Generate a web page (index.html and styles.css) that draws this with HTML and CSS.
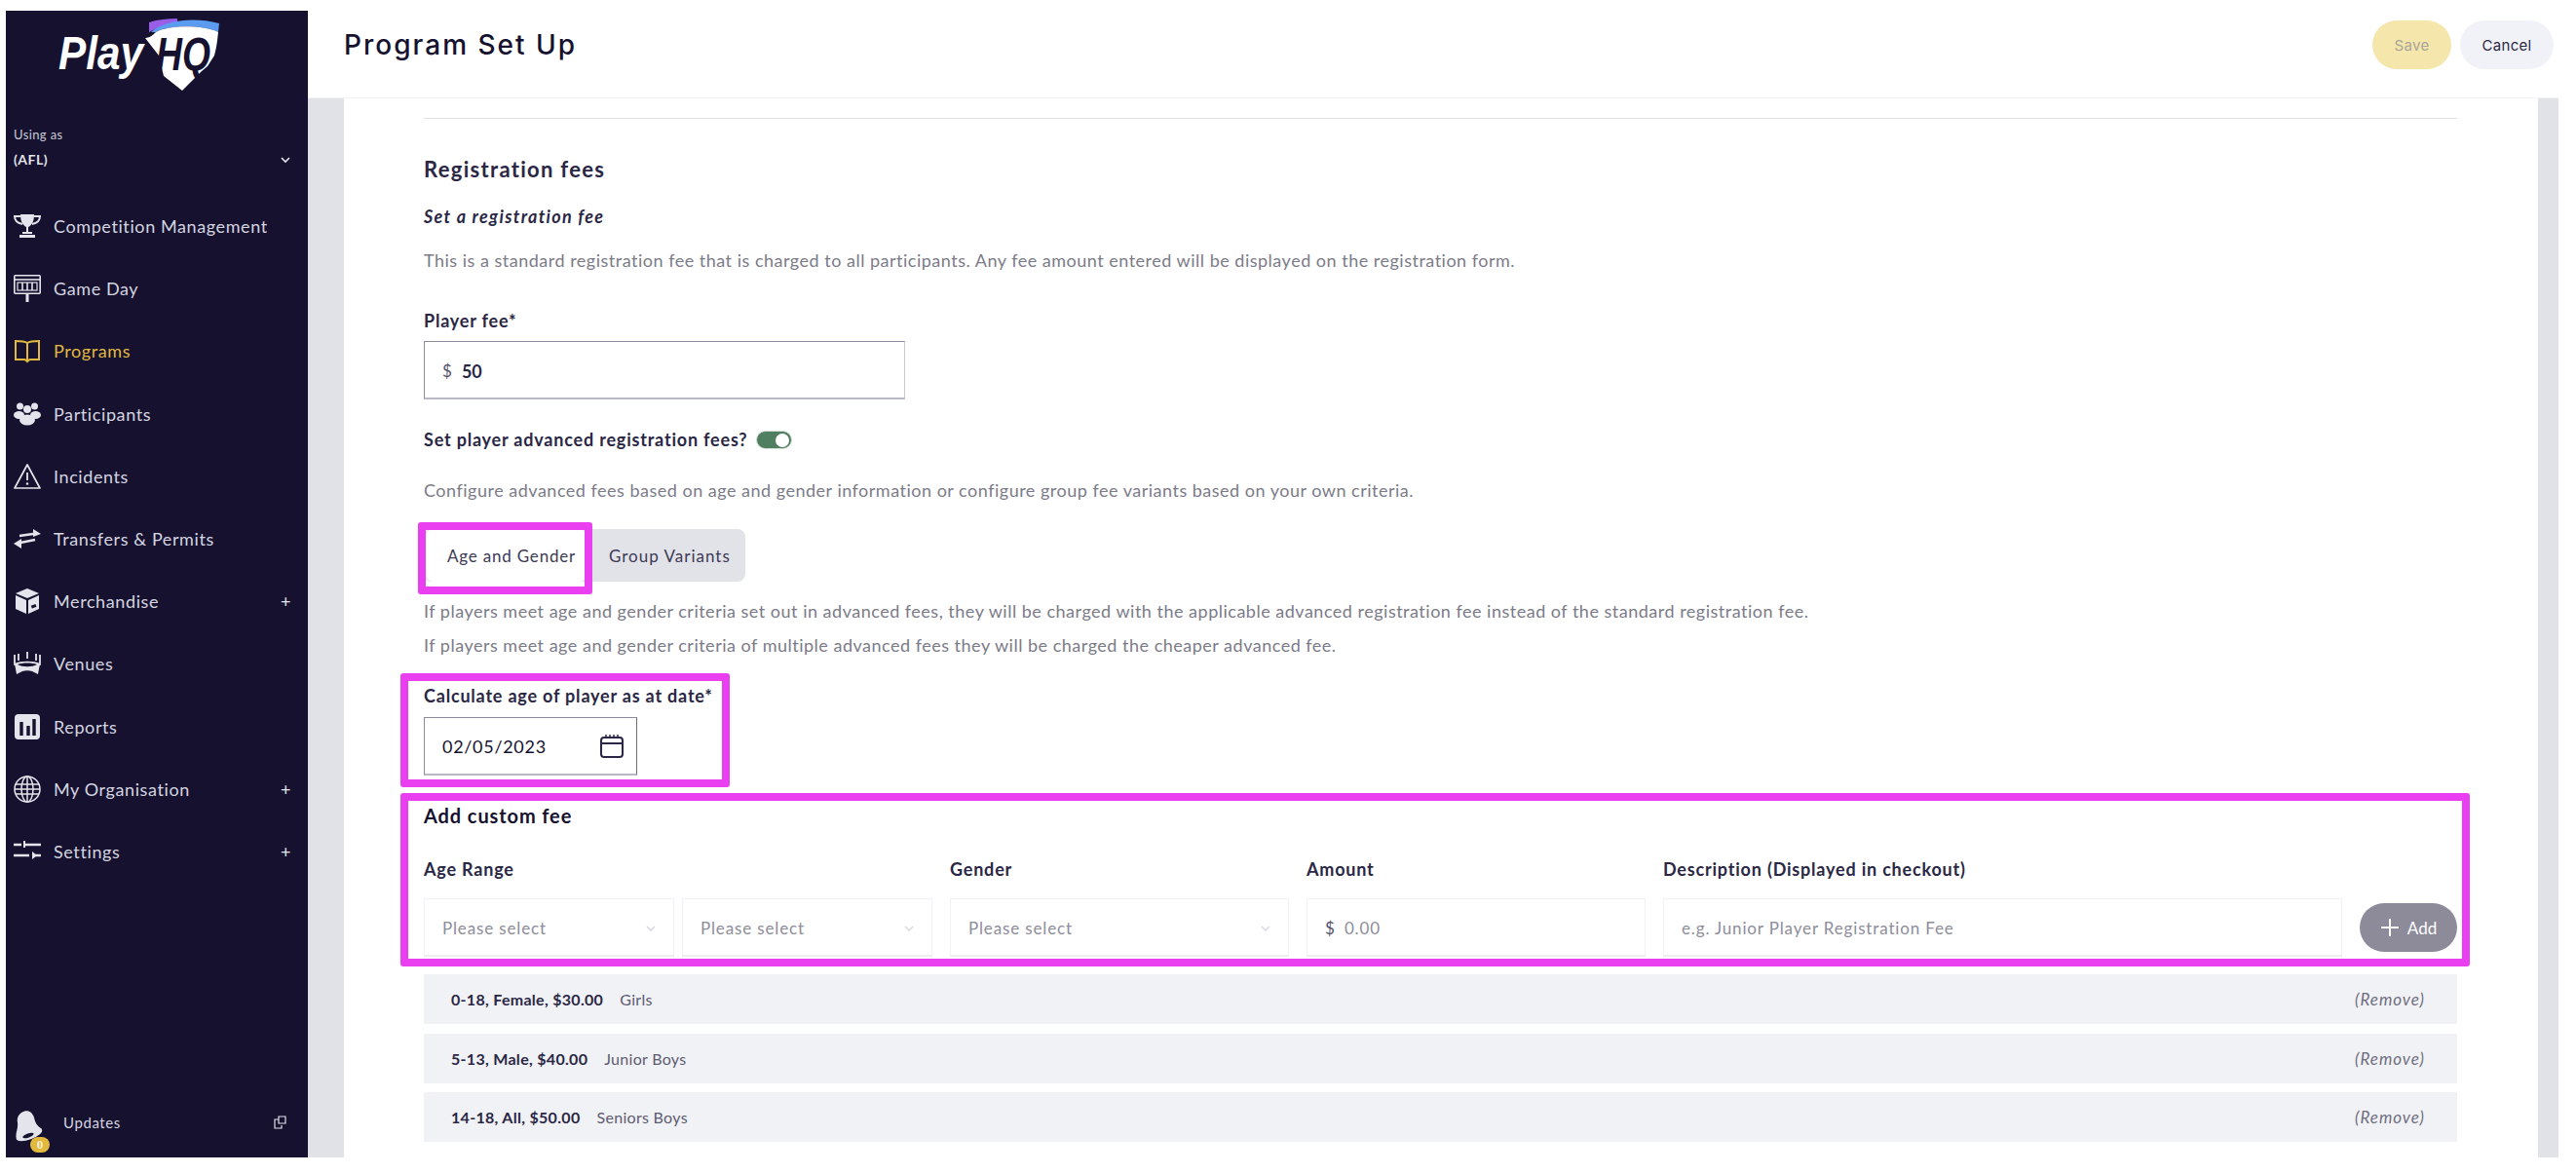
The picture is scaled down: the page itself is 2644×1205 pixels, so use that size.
FILE: index.html
```html
<!DOCTYPE html>
<html lang="en">
<head>
    <meta charset="UTF-8">
    <title>Program Set Up</title>
    <link rel="stylesheet" href="styles.css">
</head>
<body>
    <div class="app">
        <aside class="sidebar">
            <div class="logo">
                <svg width="200" height="90" viewBox="0 0 200 90">
                    <path d="M93 6 C102 3 112 2 122 2 L122 6 C112 8 102 11 93 16 Z" fill="#9a5de8"/>
                    <path d="M95 16 C105 6 135 -1 165 7 L164 16 C150 9 115 8 100 16 Z" fill="#5b9cf0"/>
                    <path d="M89 22 C93 22 97 19 100 16 C115 8 150 9 164 16 C163 26 162 33 160 40 L153 51 L147 56 L127 76 L108 61 L103 40 Z" fill="#fff"/>
                    <text x="0" y="54" class="logo-play" textLength="87" lengthAdjust="spacingAndGlyphs">Play</text>
                    <text x="100" y="55" class="logo-hq" textLength="56" lengthAdjust="spacingAndGlyphs">HQ</text>
                </svg>
            </div>

            <div class="org">
                <div class="org-label">Using as</div>
                <div class="org-name">
                    <span>(AFL)</span>
                    <svg width="12" height="8" viewBox="0 0 12 8"><path d="M2 2 L6 6 L10 2" fill="none" stroke="#e3e4ec" stroke-width="1.6"/></svg>
                </div>
            </div>

            <nav class="nav">
                <a class="nav-item">
                    <svg class="nav-icon" viewBox="0 0 28 28"><path d="M7 2 H21 C21 9 19 13 15 15 V20 H19 V22 H9 V20 H13 V15 C9 13 7 9 7 2 Z" fill="#e3e4ec"/><path d="M7 4 H1 C1 9 4 11 9 12 M21 4 H27 C27 9 24 11 19 12" fill="none" stroke="#e3e4ec" stroke-width="2"/><rect x="6" y="23" width="16" height="3" fill="#e3e4ec"/></svg>
                    <span>Competition Management</span>
                </a>
                <a class="nav-item">
                    <svg class="nav-icon" viewBox="0 0 28 28"><rect x="0.8" y="0.8" width="26.4" height="18.4" rx="1" fill="none" stroke="#e3e4ec" stroke-width="1.6"/><path d="M1 5 H27" stroke="#e3e4ec" stroke-width="1.6"/><rect x="4" y="8" width="20" height="8" fill="none" stroke="#e3e4ec" stroke-width="1.2"/><path d="M9 8 V16 M14 8 V16 M19 8 V16" stroke="#e3e4ec" stroke-width="1.6"/><rect x="12.5" y="20" width="3" height="8" fill="#e3e4ec"/></svg>
                    <span>Game Day</span>
                </a>
                <a class="nav-item active">
                    <svg class="nav-icon" viewBox="0 0 28 28"><path d="M14 6 C11 4 6 4 2 4 V23 H11 C12 23 13 24 14 25 C15 24 16 23 17 23 H26 V4 C22 4 17 4 14 6 Z M14 6 V24" fill="none" stroke="#e2b93f" stroke-width="2"/></svg>
                    <span>Programs</span>
                </a>
                <a class="nav-item">
                    <svg class="nav-icon" viewBox="0 0 28 28"><g fill="#e3e4ec"><circle cx="6.5" cy="6" r="3.5"/><circle cx="21.5" cy="6" r="3.5"/><circle cx="14" cy="9" r="4"/><ellipse cx="5.5" cy="15" rx="5.5" ry="4"/><ellipse cx="22.5" cy="15" rx="5.5" ry="4"/><ellipse cx="14" cy="20" rx="8" ry="5.5"/></g></svg>
                    <span>Participants</span>
                </a>
                <a class="nav-item">
                    <svg class="nav-icon" viewBox="0 0 28 28"><path d="M14 2 L27 26 H1 Z" fill="none" stroke="#e3e4ec" stroke-width="1.7" stroke-linejoin="round"/><path d="M14 10 V18" stroke="#e3e4ec" stroke-width="1.8"/><circle cx="14" cy="21.5" r="1.2" fill="#e3e4ec"/></svg>
                    <span>Incidents</span>
                </a>
                <a class="nav-item">
                    <svg class="nav-icon" viewBox="0 0 28 28"><path d="M6 11 L20 9 M22 15 L7 18" stroke="#e3e4ec" stroke-width="2.6"/><path d="M20 4 L28 9 L20 12 Z M8 14 L0 19 L8 24 Z" fill="#e3e4ec"/></svg>
                    <span>Transfers &amp; Permits</span>
                </a>
                <a class="nav-item">
                    <svg class="nav-icon" viewBox="0 0 28 28"><path d="M14 1 L26 6 L14 11 L2 6 Z M2 8 L13 13 V27 L2 22 Z M15 13 L26 8 V22 L15 27 Z" fill="#e3e4ec"/><rect x="18" y="18" width="5" height="3" fill="#15112e" transform="rotate(-22 20 19)"/></svg>
                    <span>Merchandise</span>
                    <span class="nav-plus">+</span>
                </a>
                <a class="nav-item">
                    <svg class="nav-icon" viewBox="0 0 28 28"><path d="M1 5 V15 C6 18 22 18 27 15 V5 M5 4 V11 M14 2 V9 M23 4 V11" fill="none" stroke="#e3e4ec" stroke-width="1.8"/><path d="M1 14 C7 11 21 11 27 14 L25 25 L19 22 C16 21 12 21 9 22 L3 25 Z" fill="#e3e4ec"/><path d="M4 15 C9 13 19 13 24 15 C19 18 9 18 4 15 Z" fill="#15112e"/></svg>
                    <span>Venues</span>
                </a>
                <a class="nav-item">
                    <svg class="nav-icon" viewBox="0 0 28 28"><rect x="1" y="1" width="26" height="26" rx="4" fill="#e3e4ec"/><path d="M8 9 V23 M15 13 V23 M21 6 V23" stroke="#15112e" stroke-width="3.4"/></svg>
                    <span>Reports</span>
                </a>
                <a class="nav-item">
                    <svg class="nav-icon" viewBox="0 0 28 28"><g fill="none" stroke="#e3e4ec" stroke-width="1.5"><circle cx="14" cy="14" r="13"/><ellipse cx="14" cy="14" rx="6" ry="13"/><path d="M14 1 V27 M2 9 H26 M1 14 H27 M2 19 H26"/></g></svg>
                    <span>My Organisation</span>
                    <span class="nav-plus">+</span>
                </a>
                <a class="nav-item">
                    <svg class="nav-icon" viewBox="0 0 28 28"><path d="M0 7 H8 M12 7 H28 M0 18 H16 M22 18 H28" stroke="#e3e4ec" stroke-width="2.6"/><path d="M11 3 V10" stroke="#e3e4ec" stroke-width="2"/><path d="M19 14 V22 L24 18 Z" fill="#e3e4ec"/></svg>
                    <span>Settings</span>
                    <span class="nav-plus">+</span>
                </a>
            </nav>

            <div class="updates">
                <div class="bell">
                    <svg width="32" height="36" viewBox="0 0 32 36"><path d="M8 3 C14 -1 19 2 21 8 C22 14 25 17 29 20 L3 30 C1 25 5 20 4 13 C3 9 5 5 8 3 Z" fill="#e3e4ec"/><ellipse cx="16" cy="25.5" rx="14" ry="5" transform="rotate(-20 16 25.5)" fill="#e3e4ec"/><ellipse cx="15" cy="26.5" rx="6" ry="2" transform="rotate(-20 15 26.5)" fill="#15112e"/></svg>
                    <span class="bell-badge">0</span>
                </div>
                <span class="updates-label">Updates</span>
                <svg class="updates-link" width="13" height="14" viewBox="0 0 13 14"><path d="M5 1 H12 V8 H5 Z M5 4 H1 V13 H8 V10" fill="none" stroke="#e3e4ec" stroke-width="1.2"/></svg>
            </div>
        </aside>

        <div class="page">
            <header class="topbar">
                <h1>Program Set Up</h1>
                <div class="topbar-actions">
                    <button class="btn btn-save">Save</button>
                    <button class="btn btn-cancel">Cancel</button>
                </div>
            </header>

            <main class="main">
                <div class="content">
                    <hr class="divider">
                    <h2 class="section-title">Registration fees</h2>
                    <h3 class="sub-title">Set a registration fee</h3>
                    <p class="help help-first">This is a standard registration fee that is charged to all participants. Any fee amount entered will be displayed on the registration form.</p>

                    <label class="field-label label-player">Player fee*</label>
                    <div class="input input-player"><span class="currency">$</span><span class="value">50</span></div>

                    <div class="toggle-row">
                        <span class="field-label">Set player advanced registration fees?</span>
                        <span class="toggle"><span class="knob"></span></span>
                    </div>

                    <p class="help help-config">Configure advanced fees based on age and gender information or configure group fee variants based on your own criteria.</p>

                    <div class="tabs">
                        <div class="tab tab-active">Age and Gender</div>
                        <div class="tab">Group Variants</div>
                        <div class="tab-mark"></div>
                    </div>

                    <p class="help help-tab">If players meet age and gender criteria set out in advanced fees, they will be charged with the applicable advanced registration fee instead of the standard registration fee.</p>
                    <p class="help help-tab2">If players meet age and gender criteria of multiple advanced fees they will be charged the cheaper advanced fee.</p>

                    <div class="mark mark-date">
                        <label class="field-label">Calculate age of player as at date*</label>
                        <div class="input input-date">
                            <span class="date-value">02/05/2023</span>
                            <svg width="26" height="26" viewBox="0 0 26 26"><rect x="2" y="4" width="22" height="20" rx="3" fill="none" stroke="#2a2745" stroke-width="2"/><path d="M2 10 H24" stroke="#2a2745" stroke-width="2"/><path d="M7 1 V5 M11 1 V5 M15 1 V5 M19 1 V5" stroke="#2a2745" stroke-width="1.5"/></svg>
                        </div>
                    </div>

                    <div class="mark mark-custom">
                        <h4 class="custom-title">Add custom fee</h4>
                        <div class="custom-grid">
                            <label class="field-label">Age Range</label>
                            <label class="field-label">Gender</label>
                            <label class="field-label">Amount</label>
                            <label class="field-label">Description (Displayed in checkout)</label>
                            <span></span>

                            <div class="select-pair">
                                <div class="input input-soft"><span class="placeholder">Please select</span><svg class="chev" width="10" height="6" viewBox="0 0 10 6"><path d="M1 1 L5 5 L9 1" fill="none" stroke="#d5d6de" stroke-width="1.3"/></svg></div>
                                <div class="input input-soft"><span class="placeholder">Please select</span><svg class="chev" width="10" height="6" viewBox="0 0 10 6"><path d="M1 1 L5 5 L9 1" fill="none" stroke="#d5d6de" stroke-width="1.3"/></svg></div>
                            </div>
                            <div class="input input-soft"><span class="placeholder">Please select</span><svg class="chev" width="10" height="6" viewBox="0 0 10 6"><path d="M1 1 L5 5 L9 1" fill="none" stroke="#d5d6de" stroke-width="1.3"/></svg></div>
                            <div class="input input-soft input-amount"><span class="currency">$</span><span class="placeholder">0.00</span></div>
                            <div class="input input-soft"><span class="placeholder">e.g. Junior Player Registration Fee</span></div>
                            <button class="btn-add"><svg width="20" height="20" viewBox="0 0 20 20"><path d="M10 1 V19 M1 10 H19" stroke="#fff" stroke-width="2"/></svg>Add</button>
                        </div>
                    </div>

                    <div class="fee-list">
                        <div class="fee-row"><strong>0-18, Female, $30.00</strong><span class="fee-name">Girls</span><em class="fee-remove">(Remove)</em></div>
                        <div class="fee-row"><strong>5-13, Male, $40.00</strong><span class="fee-name">Junior Boys</span><em class="fee-remove">(Remove)</em></div>
                        <div class="fee-row"><strong>14-18, All, $50.00</strong><span class="fee-name">Seniors Boys</span><em class="fee-remove">(Remove)</em></div>
                    </div>
                </div>
            </main>
        </div>
    </div>
</body>
</html>
```

FILE: styles.css
```css
* {
    box-sizing: border-box;
}

body {
    margin: 0;
    background-color: #fff;
    font-family: "Lato", "Open Sans", sans-serif;
    color: #2a2745;
}

.app {
    display: flex;
    margin: 11px 18px 0 6px;
    height: 1177px;
}

/* Sidebar */
.sidebar {
    width: 310px;
    flex-shrink: 0;
    background-color: #15112e;
    color: #e3e4ec;
    display: flex;
    flex-direction: column;
}

.logo {
    height: 110px;
    padding: 6px 0 0 54px;
}

.logo svg {
    display: block;
    overflow: visible;
}

.logo-play {
    font-family: "Liberation Sans", sans-serif;
    font-weight: 700;
    font-style: italic;
    font-size: 48px;
    fill: #fff;
}

.logo-hq {
    font-family: "Liberation Sans", sans-serif;
    font-weight: 700;
    font-style: italic;
    font-size: 48px;
    fill: #15112e;
}

.org {
    padding: 8px 17px 0 8px;
}

.org-label {
    font-size: 13px;
    line-height: 18px;
    letter-spacing: 0.4px;
    color: #c9cad6;
}

.org-name {
    display: flex;
    justify-content: space-between;
    align-items: center;
    margin-top: 8px;
    font-size: 14px;
    line-height: 18px;
    font-weight: 700;
    letter-spacing: 0.5px;
}

.nav {
    margin-top: 27px;
}

.nav-item {
    display: flex;
    align-items: center;
    height: 64.2px;
    padding: 0 17px 0 8px;
    font-size: 18px;
    letter-spacing: 0.6px;
    color: #d4d5e0;
}

.nav-item.active {
    color: #e2b93f;
}

.nav-icon {
    width: 28px;
    height: 28px;
    margin-right: 13px;
    flex-shrink: 0;
}

.nav-plus {
    margin-left: auto;
    font-size: 18px;
    color: #e3e4ec;
}

.updates {
    margin-top: auto;
    display: flex;
    align-items: flex-start;
    height: 49px;
    padding: 0 22px 0 8px;
    font-size: 15px;
}

.bell {
    position: relative;
    width: 51px;
    height: 36px;
}

.bell-badge {
    position: absolute;
    left: 17px;
    top: 28px;
    width: 20px;
    height: 16px;
    border-radius: 8px;
    background-color: #e2b93f;
    color: #f5efd2;
    font-family: "Liberation Serif", serif;
    font-weight: 700;
    font-size: 13px;
    line-height: 16px;
    text-align: center;
}

.updates-label {
    flex: 1;
    line-height: 26px;
    letter-spacing: 0.6px;
    color: #d4d5e0;
}

.updates-link {
    margin-top: 6px;
}

/* Top bar */
.page {
    flex: 1;
    display: flex;
    flex-direction: column;
    min-width: 0;
}

.topbar {
    height: 90px;
    display: flex;
    justify-content: space-between;
    align-items: flex-start;
    padding: 10px 5px 0 37px;
    border-bottom: 1px solid #f1f2f6;
}

.topbar h1 {
    margin: 6px 0 0;
    font-family: "Inter", sans-serif;
    font-size: 28px;
    line-height: 38px;
    font-weight: 500;
    letter-spacing: 2px;
    color: #15112e;
}

.topbar-actions {
    display: flex;
    gap: 9px;
}

.btn {
    height: 50px;
    border: none;
    border-radius: 25px;
    font-family: "Inter", sans-serif;
    font-size: 15px;
    letter-spacing: 0.3px;
}

.btn-save {
    width: 81px;
    background-color: #f5e6ab;
    color: #a9a59a;
}

.btn-cancel {
    width: 96px;
    background-color: #f1f2f7;
    color: #2a2745;
}

/* Main area */
.main {
    flex: 1;
    background-color: #e1e2e8;
    padding: 0 21px 0 37px;
    min-height: 0;
}

.content {
    height: 100%;
    background-color: #fff;
    padding: 20px 83px 0 82px;
    overflow: hidden;
}

.divider {
    margin: 0;
    border: none;
    border-top: 1px solid #e1e2e8;
}

.section-title {
    margin: 37px 0 0;
    font-size: 22px;
    line-height: 30px;
    font-weight: 700;
    letter-spacing: 1.3px;
}

.sub-title {
    margin: 20px 0 0;
    font-size: 18px;
    line-height: 26px;
    font-weight: 700;
    font-style: italic;
    letter-spacing: 1.3px;
}

.help {
    margin: 0;
    font-size: 18px;
    line-height: 26px;
    letter-spacing: 0.5px;
    color: #7c7b88;
}

.help-first {
    margin-top: 19px;
}

.help-config {
    margin-top: 27px;
}

.help-tab {
    margin-top: 17px;
}

.help-tab2 {
    margin-top: 9px;
}

.field-label {
    display: block;
    font-size: 18px;
    line-height: 24px;
    font-weight: 700;
    letter-spacing: 0.8px;
    color: #2a2745;
}

.label-player {
    margin-top: 37px;
}

.input {
    display: flex;
    align-items: center;
    height: 60px;
    padding: 0 18px;
    background-color: #fff;
    border: 1px solid #8d8a9f;
    border-right-color: #c9c8d4;
    border-bottom: 2px solid #b9b8c6;
    font-size: 18px;
}

.input-player {
    width: 494px;
    height: 60px;
    margin-top: 9px;
    padding-top: 2px;
}

.currency {
    color: #55536a;
    margin-right: 10px;
    font-size: 17px;
}

.value {
    font-weight: 700;
    color: #2a2745;
}

.toggle-row {
    display: flex;
    align-items: center;
    gap: 9px;
    margin-top: 29px;
}

.toggle {
    display: flex;
    justify-content: flex-end;
    width: 37px;
    height: 19px;
    padding: 2px;
    border-radius: 10px;
    background-color: #4f7f60;
    border: 1px solid #d5dfd8;
}

.knob {
    width: 14px;
    height: 14px;
    border-radius: 50%;
    background-color: #fff;
}

/* Tabs */
.tabs {
    position: relative;
    display: inline-flex;
    width: 330px;
    height: 54px;
    margin-top: 27px;
    padding: 0 2px;
    background-color: #e2e3e9;
    border-radius: 8px;
    vertical-align: top;
}

.tab {
    display: flex;
    align-items: center;
    padding: 0 0 0 23px;
    font-size: 17px;
    letter-spacing: 1px;
    color: #3c3a55;
    white-space: nowrap;
}

.tab-active {
    width: 165px;
    flex-shrink: 0;
    padding: 0 0 0 22px;
    background-color: #fff;
    border-radius: 8px;
    letter-spacing: 0.8px;
}

/* Pink review marks */
.tab-mark {
    position: absolute;
    left: -6px;
    top: -7px;
    width: 179px;
    height: 74px;
    border: 8px solid #ea3ff0;
    border-radius: 3px;
}

.mark {
    border: 8px solid #ea3ff0;
    border-radius: 3px;
    margin-left: -24px;
}

.mark-date {
    width: 338px;
    height: 117px;
    margin-top: 16px;
    padding: 3px 0 0 16px;
}

.input-date {
    width: 219px;
    margin-top: 10px;
    justify-content: space-between;
    padding-right: 12px;
    border-right-color: #6f6c85;
}

.date-value {
    font-size: 18px;
    letter-spacing: 0.7px;
    color: #15112e;
}

.mark-custom {
    width: 2124px;
    height: 178px;
    margin-top: 6px;
    padding: 2px 4px 2px 16px;
}

.custom-title {
    margin: 0;
    font-size: 20px;
    line-height: 26px;
    font-weight: 700;
    letter-spacing: 0.9px;
    color: #15112e;
}

.custom-grid {
    display: grid;
    grid-template-columns: 522px 348px 348px 697px 100px;
    grid-template-rows: 24px 60px;
    column-gap: 18px;
    row-gap: 18px;
    margin-top: 30px;
}

.select-pair {
    display: flex;
    gap: 8px;
}

.select-pair .input {
    flex: 1;
}

.input-soft {
    justify-content: space-between;
    border: 1px solid #f1f2f6;
    border-bottom: 2px solid #eceded;
    padding: 2px 18px 0;
}

.input-amount {
    justify-content: flex-start;
}

.placeholder {
    font-size: 17px;
    letter-spacing: 0.85px;
    color: #8e8d9a;
}

.chev {
    flex-shrink: 0;
}

.btn-add {
    align-self: center;
    height: 50px;
    display: flex;
    align-items: center;
    justify-content: center;
    gap: 8px;
    border: none;
    border-radius: 25px;
    background-color: #8d8a9a;
    color: #fff;
    font-family: "Lato", sans-serif;
    font-size: 17px;
}

/* Fee rows */
.fee-list {
    display: flex;
    flex-direction: column;
    gap: 9.5px;
    margin-top: 8px;
}

.fee-row {
    display: flex;
    align-items: center;
    height: 51px;
    padding: 0 33px 0 28px;
    background-color: #f1f2f6;
    font-size: 16px;
    letter-spacing: 0.3px;
    color: #2a2745;
}

.fee-name {
    margin-left: 17px;
    color: #5d5b70;
}

.fee-remove {
    margin-left: auto;
    font-size: 17px;
    letter-spacing: 1px;
    color: #6f6e7e;
}
```
